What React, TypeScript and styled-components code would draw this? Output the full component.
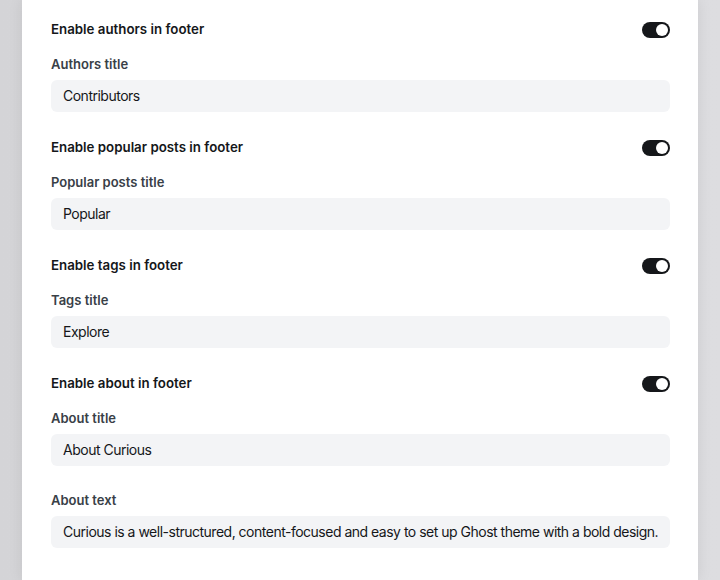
import React, { useState } from 'react'
import styled, { createGlobalStyle } from 'styled-components'

const GlobalStyle = createGlobalStyle`
  html, body {
    margin: 0;
    padding: 0;
    background: #d6d6d9;
    font-family: Inter, "Noto Sans", sans-serif;
    -webkit-font-smoothing: antialiased;
  }
`

const Backdrop = styled.div`
  width: 720px;
  height: 580px;
  overflow: hidden;
  background: linear-gradient(90deg, #d4d4d7 0%, #dddde0 100%);
  padding: 0 22px;
  box-sizing: border-box;
`

const Panel = styled.div`
  background: #ffffff;
  height: 100%;
  box-sizing: border-box;
  padding: 20px 28px 0 29px;
  display: flex;
  flex-direction: column;
  box-shadow: 0 0 14px rgba(0, 0, 0, 0.08);
`

const Group = styled.section`
  display: flex;
  flex-direction: column;
  & + & {
    margin-top: 26px;
  }
`

const ToggleRow = styled.div`
  display: flex;
  align-items: center;
  justify-content: space-between;
  height: 20px;
  margin-bottom: 14px;
`

const ToggleLabel = styled.span`
  font-size: 13.3px;
  font-weight: 600;
  color: #15171a;
  padding-bottom: 2px;
`

const Switch = styled.button<{ on: boolean }>`
  width: 28px;
  height: 16px;
  border: none;
  padding: 2px;
  border-radius: 8px;
  background: ${({ on }) => (on ? '#15171a' : '#e6e9eb')};
  display: flex;
  justify-content: ${({ on }) => (on ? 'flex-end' : 'flex-start')};
  align-items: center;
  cursor: pointer;
  &::after {
    content: '';
    width: 12px;
    height: 12px;
    border-radius: 50%;
    background: #ffffff;
  }
`

const Field = styled.label<{ spaced?: boolean }>`
  display: flex;
  flex-direction: column;
  margin-top: ${({ spaced }) => (spaced ? '24px' : '0')};
`

const FieldLabel = styled.span`
  font-size: 13px;
  line-height: 20px;
  font-weight: 600;
  color: #394047;
  margin-bottom: 6px;
`

const Input = styled.input`
  height: 32px;
  box-sizing: border-box;
  border: none;
  border-radius: 6px;
  background: #f3f4f6;
  padding: 0 12px 2px;
  font-family: Inter, "Noto Sans", sans-serif;
  font-size: 14px;
  letter-spacing: -0.5px;
  color: #15171a;
  outline: none;
  width: 100%;
`

type Section = {
  toggle: string
  label: string
  value: string
}

const sections: Section[] = [
  { toggle: 'Enable authors in footer', label: 'Authors title', value: 'Contributors' },
  { toggle: 'Enable popular posts in footer', label: 'Popular posts title', value: 'Popular' },
  { toggle: 'Enable tags in footer', label: 'Tags title', value: 'Explore' },
  { toggle: 'Enable about in footer', label: 'About title', value: 'About Curious' },
]

const FooterSettings: React.FC = () => {
  const [enabled, setEnabled] = useState<boolean[]>(sections.map(() => true))
  const [aboutText, setAboutText] = useState(
    'Curious is a well-structured, content-focused and easy to set up Ghost theme with a bold design.'
  )

  return (
    <Backdrop>
      <Panel>
        {sections.map((section, index) => (
          <Group key={section.toggle}>
            <ToggleRow>
              <ToggleLabel>{section.toggle}</ToggleLabel>
              <Switch
                on={enabled[index]}
                onClick={() =>
                  setEnabled(enabled.map((v, i) => (i === index ? !v : v)))
                }
              />
            </ToggleRow>
            <Field>
              <FieldLabel>{section.label}</FieldLabel>
              <Input defaultValue={section.value} />
            </Field>
            {index === sections.length - 1 && (
              <Field spaced>
                <FieldLabel>About text</FieldLabel>
                <Input
                  value={aboutText}
                  onChange={e => setAboutText(e.target.value)}
                />
              </Field>
            )}
          </Group>
        ))}
      </Panel>
    </Backdrop>
  )
}

export default function App() {
  return (
    <>
      <GlobalStyle />
      <FooterSettings />
    </>
  )
}
